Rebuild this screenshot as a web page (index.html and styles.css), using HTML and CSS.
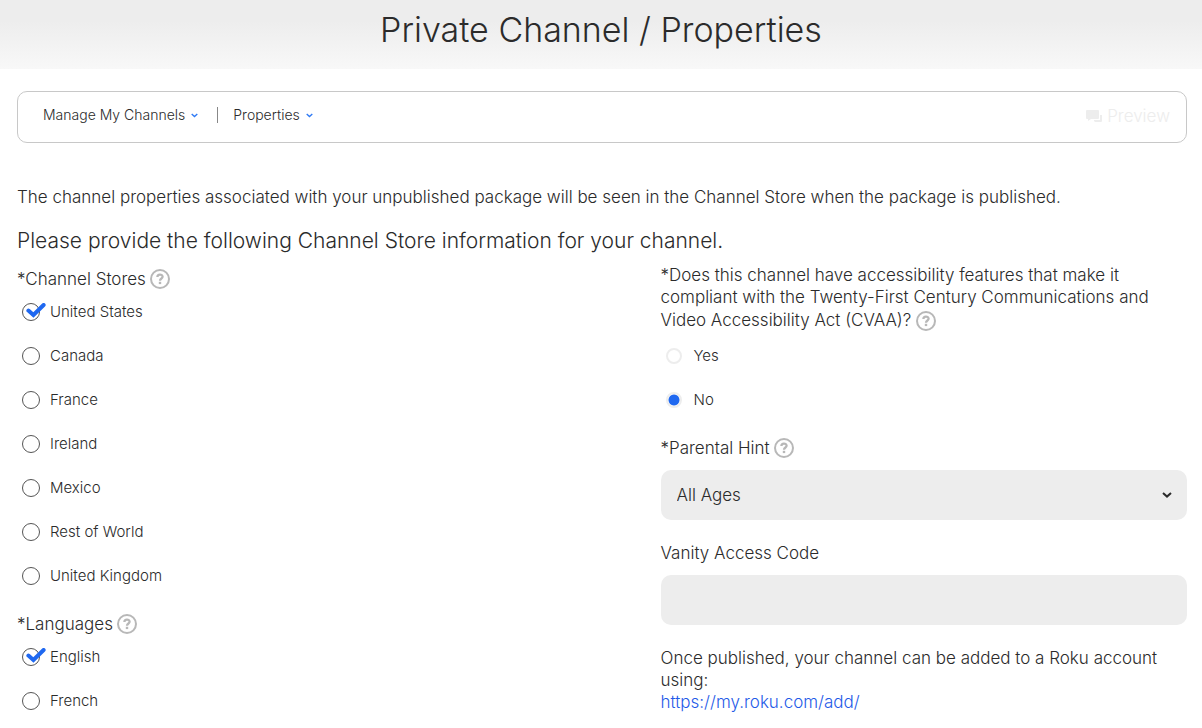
FILE: index.html
```html
<!DOCTYPE html>
<html lang="en">
<head>
<meta charset="utf-8">
<meta name="viewport" content="width=device-width, initial-scale=1">
<title>Private Channel / Properties</title>
<link rel="stylesheet" href="styles.css">
</head>
<body>
<svg class="sprite" aria-hidden="true">
  <symbol id="help" viewBox="0 0 20 20">
    <circle cx="10" cy="10" r="9" fill="none" stroke="#b8b8b8" stroke-width="2"/>
    <path d="M7.4 8 C7.4 4.8 12.6 4.8 12.6 7.8 C12.6 9.6 10 9.4 10 11.8" fill="none" stroke="#b8b8b8" stroke-width="2.3"/>
    <rect x="8.8" y="12.8" width="2.4" height="2.3" fill="#b8b8b8"/>
  </symbol>
  <symbol id="tick" viewBox="0 0 20 16">
    <path d="M2.4 7.6 L7.4 12 L17.6 2" fill="none" stroke="#1f68f0" stroke-width="4" stroke-linecap="round"/>
  </symbol>
  <symbol id="chevron" viewBox="0 0 10 6">
    <path d="M1 1 L5 4.6 L9 1" fill="none" stroke="currentColor" stroke-width="2"/>
  </symbol>
</svg>

<header class="page-header">
  <h1 class="page-title">Private Channel / Properties</h1>
</header>

<main class="page">
  <nav class="toolbar">
    <button class="menu" type="button">Manage My Channels <svg class="menu-arrow"><use href="#chevron"/></svg></button>
    <span class="divider"></span>
    <button class="menu" type="button">Properties <svg class="menu-arrow"><use href="#chevron"/></svg></button>
    <button class="preview" type="button" disabled>
      <svg class="preview-icon" viewBox="0 0 16 13" fill="currentColor"><path d="M1 0 H12 Q13 0 13 1 V8 Q13 9 12 9 H5 L2 11 V9 H1 Q0 9 0 8 V1 Q0 0 1 0 Z"/><path d="M14 5 H16 V11 Q16 12 15 12 H9 L8 11 V10 H14 Z"/></svg>
      Preview
    </button>
  </nav>

  <p class="intro">The channel properties associated with your unpublished package will be seen in the Channel Store when the package is published.</p>
  <h2 class="lead">Please provide the following Channel Store information for your channel.</h2>

  <form class="columns">
    <div class="column">
      <fieldset class="group stores">
        <legend class="heading">*Channel Stores <svg class="help"><use href="#help"/></svg></legend>
        <label class="choice"><span class="box"><input class="check" type="checkbox" checked><svg class="tick"><use href="#tick"/></svg></span>United States</label>
        <label class="choice"><span class="box"><input class="check" type="checkbox"><svg class="tick"><use href="#tick"/></svg></span>Canada</label>
        <label class="choice"><span class="box"><input class="check" type="checkbox"><svg class="tick"><use href="#tick"/></svg></span>France</label>
        <label class="choice"><span class="box"><input class="check" type="checkbox"><svg class="tick"><use href="#tick"/></svg></span>Ireland</label>
        <label class="choice"><span class="box"><input class="check" type="checkbox"><svg class="tick"><use href="#tick"/></svg></span>Mexico</label>
        <label class="choice"><span class="box"><input class="check" type="checkbox"><svg class="tick"><use href="#tick"/></svg></span>Rest of World</label>
        <label class="choice"><span class="box"><input class="check" type="checkbox"><svg class="tick"><use href="#tick"/></svg></span>United Kingdom</label>
      </fieldset>
      <fieldset class="group languages">
        <legend class="heading">*Languages <svg class="help"><use href="#help"/></svg></legend>
        <label class="choice"><span class="box"><input class="check" type="checkbox" checked><svg class="tick"><use href="#tick"/></svg></span>English</label>
        <label class="choice"><span class="box"><input class="check" type="checkbox"><svg class="tick"><use href="#tick"/></svg></span>French</label>
      </fieldset>
    </div>

    <div class="column">
      <fieldset class="group">
        <legend class="question">*Does this channel have accessibility features that make it compliant with the Twenty-First Century Communications and Video Accessibility Act (CVAA)? <svg class="help"><use href="#help"/></svg></legend>
        <label class="choice option"><input class="radio" type="radio" name="cvaa">Yes</label>
        <label class="choice option"><input class="radio" type="radio" name="cvaa" checked>No</label>
      </fieldset>

      <div class="field">
        <label class="heading" for="hint">*Parental Hint <svg class="help"><use href="#help"/></svg></label>
        <div class="select-wrap">
          <select class="control" id="hint"><option>All Ages</option></select>
          <svg class="select-arrow"><use href="#chevron"/></svg>
        </div>
      </div>

      <div class="field vanity">
        <label class="heading" for="code">Vanity Access Code</label>
        <input class="control" id="code" type="text">
      </div>

      <p class="note">Once published, your channel can be added to a Roku account using:<br><a class="link" href="https://my.roku.com/add/">https://my.roku.com/add/</a></p>
    </div>
  </form>
</main>
</body>
</html>
```
FILE: styles.css
```css
* { box-sizing: border-box; }

body {
  margin: 0;
  background: #fff;
  color: #2b2b2b;
  font-family: Inter, "Open Sans", sans-serif;
  font-size: 17px;
  font-weight: 300;
  line-height: 22px;
}

.sprite { display: none; }

.page-header {
  height: 69px;
  padding-top: 10px;
  background: linear-gradient(#ededed 30%, #f8f8f8);
  text-align: center;
}

.page-title {
  margin: 0;
  font-size: 34px;
  font-weight: 300;
  line-height: 40px;
}

.page { padding: 22px 15px 14px 17px; }

.toolbar {
  display: flex;
  align-items: center;
  height: 52px;
  padding: 0 16px 4px 25px;
  border: 1px solid #c8c8c8;
  border-radius: 10px;
}

.menu, .preview {
  display: flex;
  align-items: center;
  padding: 0;
  border: 0;
  background: none;
  color: inherit;
  font: inherit;
  line-height: 22px;
}

.menu { gap: 6px; font-size: 14px; }
.menu-arrow { width: 7px; height: 5px; color: #2f7af5; }
.divider { width: 1px; height: 16px; margin: 0 15px 0 19px; background: #888; }

.preview { gap: 5px; margin: 2px 0 0 auto; color: #ededed; font-size: 17px; }
.preview-icon { width: 16px; height: 13px; }

.intro { margin: 43px 0 0; }

.lead {
  margin: 18px 0 0;
  font-size: 21px;
  font-weight: 300;
  line-height: 30px;
}

.columns {
  display: grid;
  grid-template-columns: 55fr 45fr;
  margin-top: 8px;
}

.group { min-width: 0; margin: 0; padding: 0; border: 0; }

.heading {
  display: flex;
  align-items: center;
  gap: 4px;
  height: 30px;
  padding: 0;
}

.help { width: 20px; height: 20px; flex: none; }

.choice {
  display: flex;
  align-items: center;
  height: 22px;
  margin-bottom: 22px;
  padding-left: 5px;
  font-size: 15px;
}

.stores .heading, .languages .heading { margin-bottom: 7px; }
.languages .choice:last-child { margin-bottom: 0; }

.box { position: relative; display: flex; width: 28px; }

.check, .radio {
  appearance: none;
  flex: none;
  width: 18px;
  height: 18px;
  margin: 0;
  border: 1px solid #555;
  border-radius: 50%;
  background: #fff;
}

.tick { display: none; position: absolute; left: 4px; top: 0; width: 20px; height: 16px; }
.check:checked + .tick { display: block; }

.question { padding: 0; }
.question .help { margin: 3px 0; vertical-align: middle; }

.option { gap: 12px; }
.option:first-of-type { margin-top: 11px; }
.radio { width: 16px; height: 16px; border: 2px solid #ededed; }
.radio:checked { background: radial-gradient(circle, #1f68f0 5px, #fff 6px); }

.control {
  display: block;
  appearance: none;
  width: 100%;
  height: 50px;
  padding: 0 16px;
  border: 0;
  border-radius: 10px;
  background: #ededed;
  color: inherit;
  font: inherit;
}

.field .heading { margin-bottom: 7px; }
.vanity { margin-top: 18px; }
.select-wrap { position: relative; }
.select-arrow { position: absolute; right: 15px; top: 22px; width: 10px; height: 6px; }

.note { margin: 22px 0 0; }
.link { color: #1f5be8; text-decoration: none; }
```
